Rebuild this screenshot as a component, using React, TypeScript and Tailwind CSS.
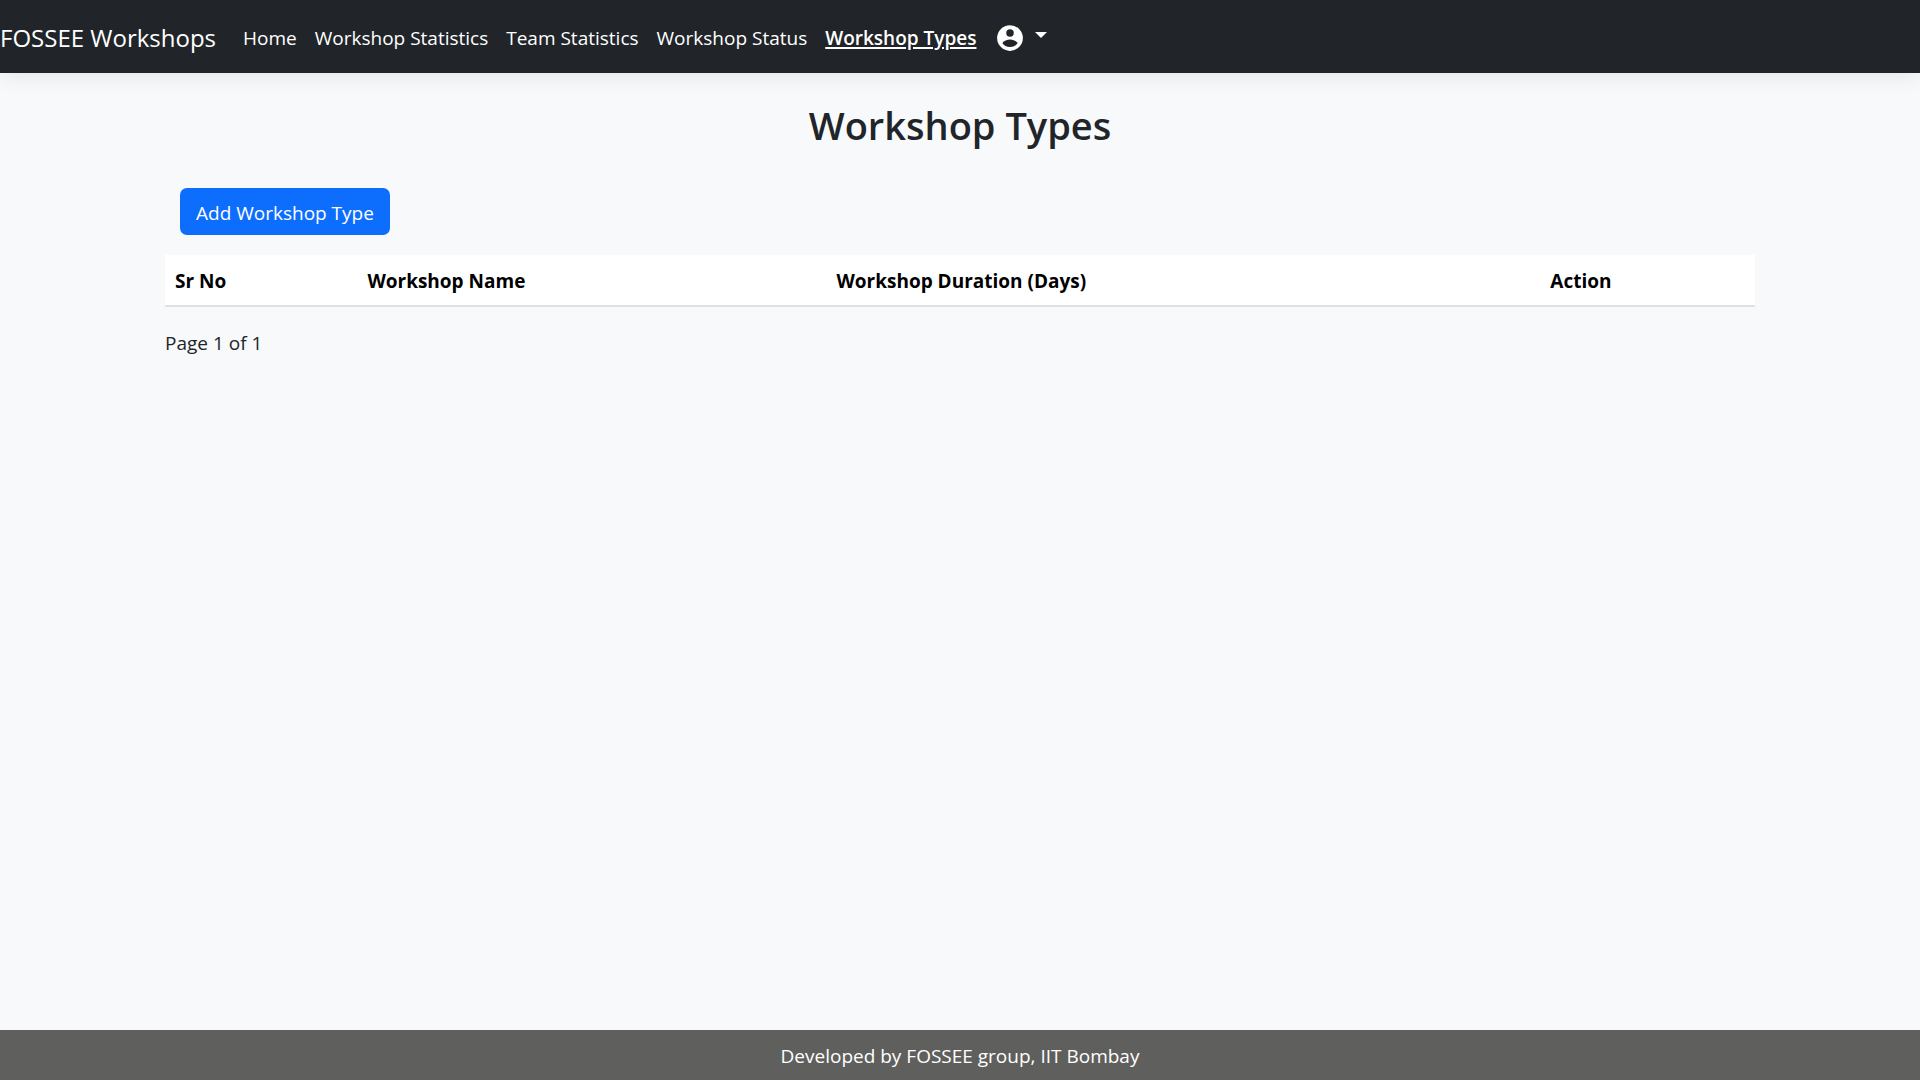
import React from "react";

const links = ["Home", "Workshop Statistics", "Team Statistics", "Workshop Status"];

const columns = [
  { label: "Sr No", width: "w-[12.1%]" },
  { label: "Workshop Name", width: "w-[29.5%]" },
  { label: "Workshop Duration (Days)", width: "w-[44.9%]" },
  { label: "Action", width: "w-[13.5%]" },
];

function AccountIcon() {
  return (
    <svg viewBox="0 0 24 24" className="size-[30px]" fill="currentColor" aria-hidden="true">
      <path
        fillRule="evenodd"
        d="M12 1.7a10.3 10.3 0 1 0 0 20.6a10.3 10.3 0 0 0 0-20.6zM12 4.900a3 3 0 1 1 0 6a3 3 0 0 1 0-6zM12 19.200c-2.700 0-4.900-1.200-6.100-3.200c1.100-1.900 3.900-2.900 6.100-2.900s5 1 6.100 2.900c-1.200 2-3.400 3.200-6.100 3.200z"
      />
    </svg>
  );
}

export default function App() {
  return (
    <div className="flex min-h-screen flex-col bg-[#f7f9fb] font-['Open_Sans','Noto_Sans',sans-serif] text-[19px] leading-[30px] text-[#212529]">
      <header className="bg-[#212529] pt-[18px] pb-[15px] text-white shadow-[0_6px_20px_-2px_rgba(0,0,0,0.08)]">
        <nav className="flex items-center">
          <a href="#" className="mr-[18px] text-[24px] leading-[40px]">FOSSEE Workshops</a>
          {links.map((label) => (
            <a key={label} href="#" className="px-[9px]">{label}</a>
          ))}
          <a href="#" aria-current="page" className="px-[9px] font-semibold underline decoration-2 underline-offset-2">Workshop Types</a>
          <button type="button" aria-label="Account" className="flex items-center gap-[10px] px-[10px]">
            <AccountIcon />
            <span className="mb-[6px] border-x-[6px] border-t-[6px] border-x-transparent border-t-white" />
          </button>
        </nav>
      </header>

      <main className="mx-auto w-full max-w-[1590px] flex-1">
        <h1 className="pt-7 text-center text-[38px] leading-[48px] font-semibold">Workshop Types</h1>
        <button type="button" className="mt-[39px] ml-[15px] h-[47px] rounded-[7px] bg-[#0d6efd] px-4 pt-[2px] text-white">
          Add Workshop Type
        </button>
        <table className="mt-5 w-full table-fixed border-b-2 border-[#dee2e6] bg-white text-left text-black">
          <thead>
            <tr>
              {columns.map((c) => (
                <th key={c.label} scope="col" className={`${c.width} px-[10px] pt-[11px] pb-[9px] font-bold`}>{c.label}</th>
              ))}
            </tr>
          </thead>
        </table>
        <p className="mt-[21px]">Page 1 of 1</p>
      </main>

      <footer className="bg-[#5f5f5d] pt-[11px] pb-[9px] text-center text-white">
        Developed by FOSSEE group, IIT Bombay
      </footer>
    </div>
  );
}
